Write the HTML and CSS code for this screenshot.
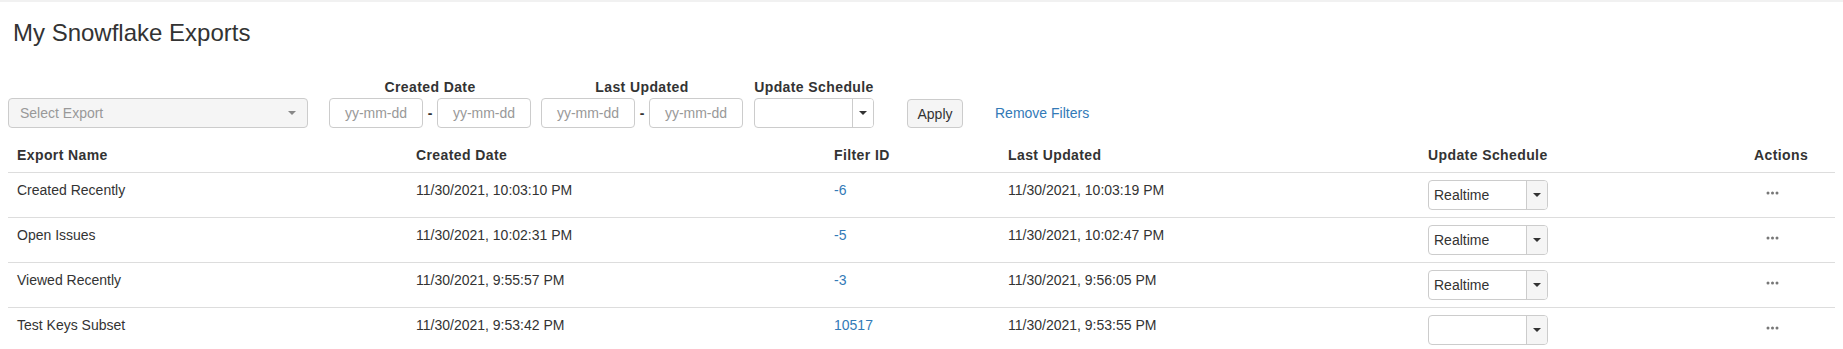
FILE: index.html
```html
<!DOCTYPE html>
<html>
<head>
<meta charset="utf-8">
<link rel="stylesheet" href="styles.css">
</head>
<body>
<div class="page">
  <h1 class="title">My Snowflake Exports</h1>
  <div class="filters">
    <div class="combo combo-export">
      <span class="combo-text">Select Export</span>
      <span class="caret caret-light"></span>
    </div>
    <div class="fgroup fgroup-created">
      <div class="flabel">Created Date</div>
      <div class="frow">
        <input class="date" placeholder="yy-mm-dd">
        <span class="dash">-</span>
        <input class="date" placeholder="yy-mm-dd">
      </div>
    </div>
    <div class="fgroup fgroup-updated">
      <div class="flabel">Last Updated</div>
      <div class="frow">
        <input class="date" placeholder="yy-mm-dd">
        <span class="dash">-</span>
        <input class="date" placeholder="yy-mm-dd">
      </div>
    </div>
    <div class="fgroup fgroup-schedule">
      <div class="flabel">Update Schedule</div>
      <div class="dd dd-filter">
        <span class="dd-value"></span>
        <span class="dd-btn"><span class="caret"></span></span>
      </div>
    </div>
    <button class="apply">Apply</button>
    <a class="remove" href="#">Remove Filters</a>
  </div>

  <table class="grid">
    <colgroup>
      <col class="c-name">
      <col class="c-created">
      <col class="c-filter">
      <col class="c-updated">
      <col class="c-schedule">
      <col class="c-actions">
    </colgroup>
    <thead>
      <tr>
        <th>Export Name</th>
        <th>Created Date</th>
        <th>Filter ID</th>
        <th>Last Updated</th>
        <th>Update Schedule</th>
        <th>Actions</th>
      </tr>
    </thead>
    <tbody>
      <tr>
        <td>Created Recently</td>
        <td>11/30/2021, 10:03:10 PM</td>
        <td><a class="link" href="#">-6</a></td>
        <td>11/30/2021, 10:03:19 PM</td>
        <td><div class="dd"><span class="dd-value">Realtime</span><span class="dd-btn"><span class="caret"></span></span></div></td>
        <td><span class="more"><svg width="13" height="4" viewBox="0 0 13 4"><circle cx="2" cy="2" r="1.5"/><circle cx="6.5" cy="2" r="1.5"/><circle cx="11" cy="2" r="1.5"/></svg></span></td>
      </tr>
      <tr>
        <td>Open Issues</td>
        <td>11/30/2021, 10:02:31 PM</td>
        <td><a class="link" href="#">-5</a></td>
        <td>11/30/2021, 10:02:47 PM</td>
        <td><div class="dd"><span class="dd-value">Realtime</span><span class="dd-btn"><span class="caret"></span></span></div></td>
        <td><span class="more"><svg width="13" height="4" viewBox="0 0 13 4"><circle cx="2" cy="2" r="1.5"/><circle cx="6.5" cy="2" r="1.5"/><circle cx="11" cy="2" r="1.5"/></svg></span></td>
      </tr>
      <tr>
        <td>Viewed Recently</td>
        <td>11/30/2021, 9:55:57 PM</td>
        <td><a class="link" href="#">-3</a></td>
        <td>11/30/2021, 9:56:05 PM</td>
        <td><div class="dd"><span class="dd-value">Realtime</span><span class="dd-btn"><span class="caret"></span></span></div></td>
        <td><span class="more"><svg width="13" height="4" viewBox="0 0 13 4"><circle cx="2" cy="2" r="1.5"/><circle cx="6.5" cy="2" r="1.5"/><circle cx="11" cy="2" r="1.5"/></svg></span></td>
      </tr>
      <tr>
        <td>Test Keys Subset</td>
        <td>11/30/2021, 9:53:42 PM</td>
        <td><a class="link" href="#">10517</a></td>
        <td>11/30/2021, 9:53:55 PM</td>
        <td><div class="dd"><span class="dd-value"></span><span class="dd-btn"><span class="caret"></span></span></div></td>
        <td><span class="more"><svg width="13" height="4" viewBox="0 0 13 4"><circle cx="2" cy="2" r="1.5"/><circle cx="6.5" cy="2" r="1.5"/><circle cx="11" cy="2" r="1.5"/></svg></span></td>
      </tr>
    </tbody>
  </table>
</div>
</body>
</html>
```

FILE: styles.css
```css
* { box-sizing: border-box; }

html, body {
  margin: 0;
  padding: 0;
  background: #fff;
}

body {
  font-family: "Liberation Sans", Arial, sans-serif;
  font-size: 14px;
  line-height: 20px;
  color: #333;
  border-top: 2px solid #f1f1f1;
}

.page {
  padding: 0 8px;
}

.title {
  margin: 18px 0 31px 5px;
  font-size: 24px;
  line-height: 26px;
  font-weight: normal;
  color: #333;
}

/* ---------- filters ---------- */
.filters {
  display: flex;
  align-items: flex-end;
  margin-bottom: 9px;
}

.combo {
  display: flex;
  align-items: center;
  justify-content: space-between;
  height: 30px;
  border: 1px solid #ccc;
  border-radius: 4px;
  background: #f5f5f5;
}

.combo-export {
  width: 300px;
  padding: 0 11px 0 11px;
}

.combo-text {
  color: #999;
}

.caret {
  display: inline-block;
  width: 0;
  height: 0;
  border-left: 4px solid transparent;
  border-right: 4px solid transparent;
  border-top: 4px solid #333;
}

.caret-light {
  border-top-color: #888;
}

.fgroup {
  display: flex;
  flex-direction: column;
}

.fgroup-created { margin-left: 21px; }
.fgroup-updated { margin-left: 10px; }
.fgroup-schedule { margin-left: 11px; }

.flabel {
  text-align: center;
  font-weight: bold;
  letter-spacing: 0.4px;
  margin-bottom: 1px;
  white-space: nowrap;
}

.frow {
  display: flex;
  align-items: center;
}

.date {
  width: 94px;
  height: 30px;
  border: 1px solid #ccc;
  border-radius: 4px;
  padding: 0 6px;
  font-family: "Liberation Sans", Arial, sans-serif;
  font-size: 14px;
  color: #333;
  text-align: center;
  background: #fff;
}

.date::placeholder {
  color: #999;
}

.dash {
  width: 14px;
  text-align: center;
  font-weight: bold;
}

.dd {
  display: flex;
  width: 120px;
  height: 30px;
  border: 1px solid #ccc;
  border-radius: 4px;
  background: #fff;
  overflow: hidden;
}

.dd-value {
  flex: 1;
  padding-left: 5px;
  line-height: 28px;
  color: #333;
  white-space: nowrap;
}

.dd-btn {
  width: 21px;
  border-left: 1px solid #ccc;
  background: #f5f5f5;
  display: flex;
  align-items: center;
  justify-content: center;
}

.dd-filter .dd-btn {
  background: #fff;
}

.apply {
  margin-left: 33px;
  width: 56px;
  height: 29px;
  border: 1px solid #ccc;
  border-radius: 4px;
  background: #f5f5f5;
  color: #333;
  font-family: "Liberation Sans", Arial, sans-serif;
  font-size: 14px;
  padding: 0;
}

.remove {
  margin-left: 32px;
  align-self: flex-end;
  line-height: 30px;
  color: #337ab7;
  text-decoration: none;
}

/* ---------- table ---------- */
.grid {
  width: 1827px;
  border-collapse: collapse;
  table-layout: fixed;
}

.c-name { width: 400px; }
.c-created { width: 418px; }
.c-filter { width: 174px; }
.c-updated { width: 420px; }
.c-schedule { width: 326px; }
.c-actions { width: 89px; }

.grid th {
  text-align: left;
  font-weight: bold;
  letter-spacing: 0.4px;
  padding: 8px 8px 7px 8px;
  border-bottom: 1px solid #ddd;
  vertical-align: bottom;
  white-space: nowrap;
}

.grid td {
  padding: 7px 8px;
  vertical-align: top;
  border-bottom: 1px solid #ddd;
  white-space: nowrap;
}

.grid th:first-child,
.grid td:first-child {
  padding-left: 9px;
}

.link {
  color: #337ab7;
  text-decoration: none;
}

.more {
  display: inline-block;
  margin-left: 12px;
  margin-top: 10px;
  line-height: 0;
}

.more svg {
  fill: #777;
  display: block;
}
```
